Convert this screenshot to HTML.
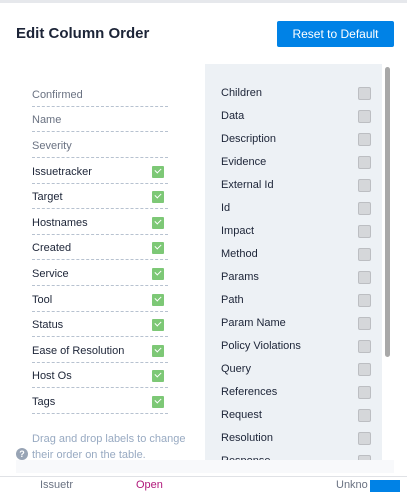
<html><head><style>
body{margin:0;width:407px;height:491px;overflow:hidden;background:#fff;font-family:"Liberation Sans",sans-serif;position:relative}
.top{position:absolute;left:0;top:0;width:407px;height:3px;background:#e6e8ec}
h1{position:absolute;left:16px;top:25px;margin:0;font-size:15px;font-weight:bold;color:#1c2437}
.btn{position:absolute;left:277px;top:21px;width:117px;height:26px;background:#0082e6;color:#fff;font-size:12px;line-height:26px;text-align:center;border-radius:2px}
.foot{position:absolute;left:16px;top:460px;width:378px;height:13px;background:#f8f9fb}
.lrow{position:absolute;left:32px;width:136px;height:25px;border-bottom:1px dashed #b7c2d0;font-size:11px;color:#1c2437;line-height:28px}
.lrow.g{color:#6a7282}
.ck{position:absolute;right:4px;top:8px;width:12px;height:12px;background:#7dc876;border-radius:1px}
.ck:after{content:"";position:absolute;left:3px;top:2px;width:5px;height:3px;border-left:1.3px solid #fff;border-bottom:1.3px solid #fff;transform:rotate(-45deg)}
.panel{position:absolute;left:205px;top:64px;width:177px;height:397px;background:#edf1f5;overflow:hidden}
.rrow{position:absolute;left:16px;width:150px;font-size:11px;color:#1c2437;height:14px;line-height:16px}
.rrow i{position:absolute;left:137px;top:2px;width:11px;height:11px;background:#d5d7da;border:1px solid #bcbec2;border-radius:2px}
.sb{position:absolute;left:385px;top:67px;width:5px;height:290px;background:#a8a8a8;border-radius:3px}
.help{position:absolute;left:32px;top:431px;font-size:11px;line-height:16px;color:#98aac2}
.q{position:absolute;left:16px;top:448px;width:12px;height:12px;border-radius:50%;background:#98a4b5;color:#fff;font-size:9px;font-weight:bold;text-align:center;line-height:12px}
.bot{position:absolute;left:0;top:476px;width:407px;height:15px;background:#fff;border-top:1px solid #e0e2e6;overflow:hidden;font-size:11px}
</style></head><body>
<div class="top"></div>
<h1>Edit Column Order</h1>
<div class="btn">Reset to Default</div>
<div class="lrow g" style="top:81px">Confirmed</div>
<div class="lrow g" style="top:106px">Name</div>
<div class="lrow g" style="top:132px">Severity</div>
<div class="lrow" style="top:158px">Issuetracker<span class="ck"></span></div>
<div class="lrow" style="top:183px">Target<span class="ck"></span></div>
<div class="lrow" style="top:209px">Hostnames<span class="ck"></span></div>
<div class="lrow" style="top:234px">Created<span class="ck"></span></div>
<div class="lrow" style="top:260px">Service<span class="ck"></span></div>
<div class="lrow" style="top:286px">Tool<span class="ck"></span></div>
<div class="lrow" style="top:311px">Status<span class="ck"></span></div>
<div class="lrow" style="top:337px">Ease of Resolution<span class="ck"></span></div>
<div class="lrow" style="top:362px">Host Os<span class="ck"></span></div>
<div class="lrow" style="top:388px">Tags<span class="ck"></span></div>
<div class="help">Drag and drop labels to change<br>their order on the table.</div>
<div class="q">?</div>
<div class="panel">
<div class="rrow" style="top:21px">Children<i></i></div>
<div class="rrow" style="top:44px">Data<i></i></div>
<div class="rrow" style="top:67px">Description<i></i></div>
<div class="rrow" style="top:90px">Evidence<i></i></div>
<div class="rrow" style="top:113px">External Id<i></i></div>
<div class="rrow" style="top:136px">Id<i></i></div>
<div class="rrow" style="top:159px">Impact<i></i></div>
<div class="rrow" style="top:182px">Method<i></i></div>
<div class="rrow" style="top:205px">Params<i></i></div>
<div class="rrow" style="top:228px">Path<i></i></div>
<div class="rrow" style="top:251px">Param Name<i></i></div>
<div class="rrow" style="top:274px">Policy Violations<i></i></div>
<div class="rrow" style="top:297px">Query<i></i></div>
<div class="rrow" style="top:320px">References<i></i></div>
<div class="rrow" style="top:343px">Request<i></i></div>
<div class="rrow" style="top:366px">Resolution<i></i></div>
<div class="rrow" style="top:389px">Response<i></i></div>
</div>
<div class="sb"></div>
<div class="foot"></div>
<div class="bot"><span style="position:absolute;left:40px;top:2px;color:#6a7282">Issuetr</span><span style="position:absolute;left:136px;top:2px;color:#b0187a">Open</span><span style="position:absolute;left:336px;top:2px;color:#6a7282">Unkno</span><span style="position:absolute;left:370px;top:3px;width:30px;height:12px;background:#0082e6"></span></div>
</body></html>
